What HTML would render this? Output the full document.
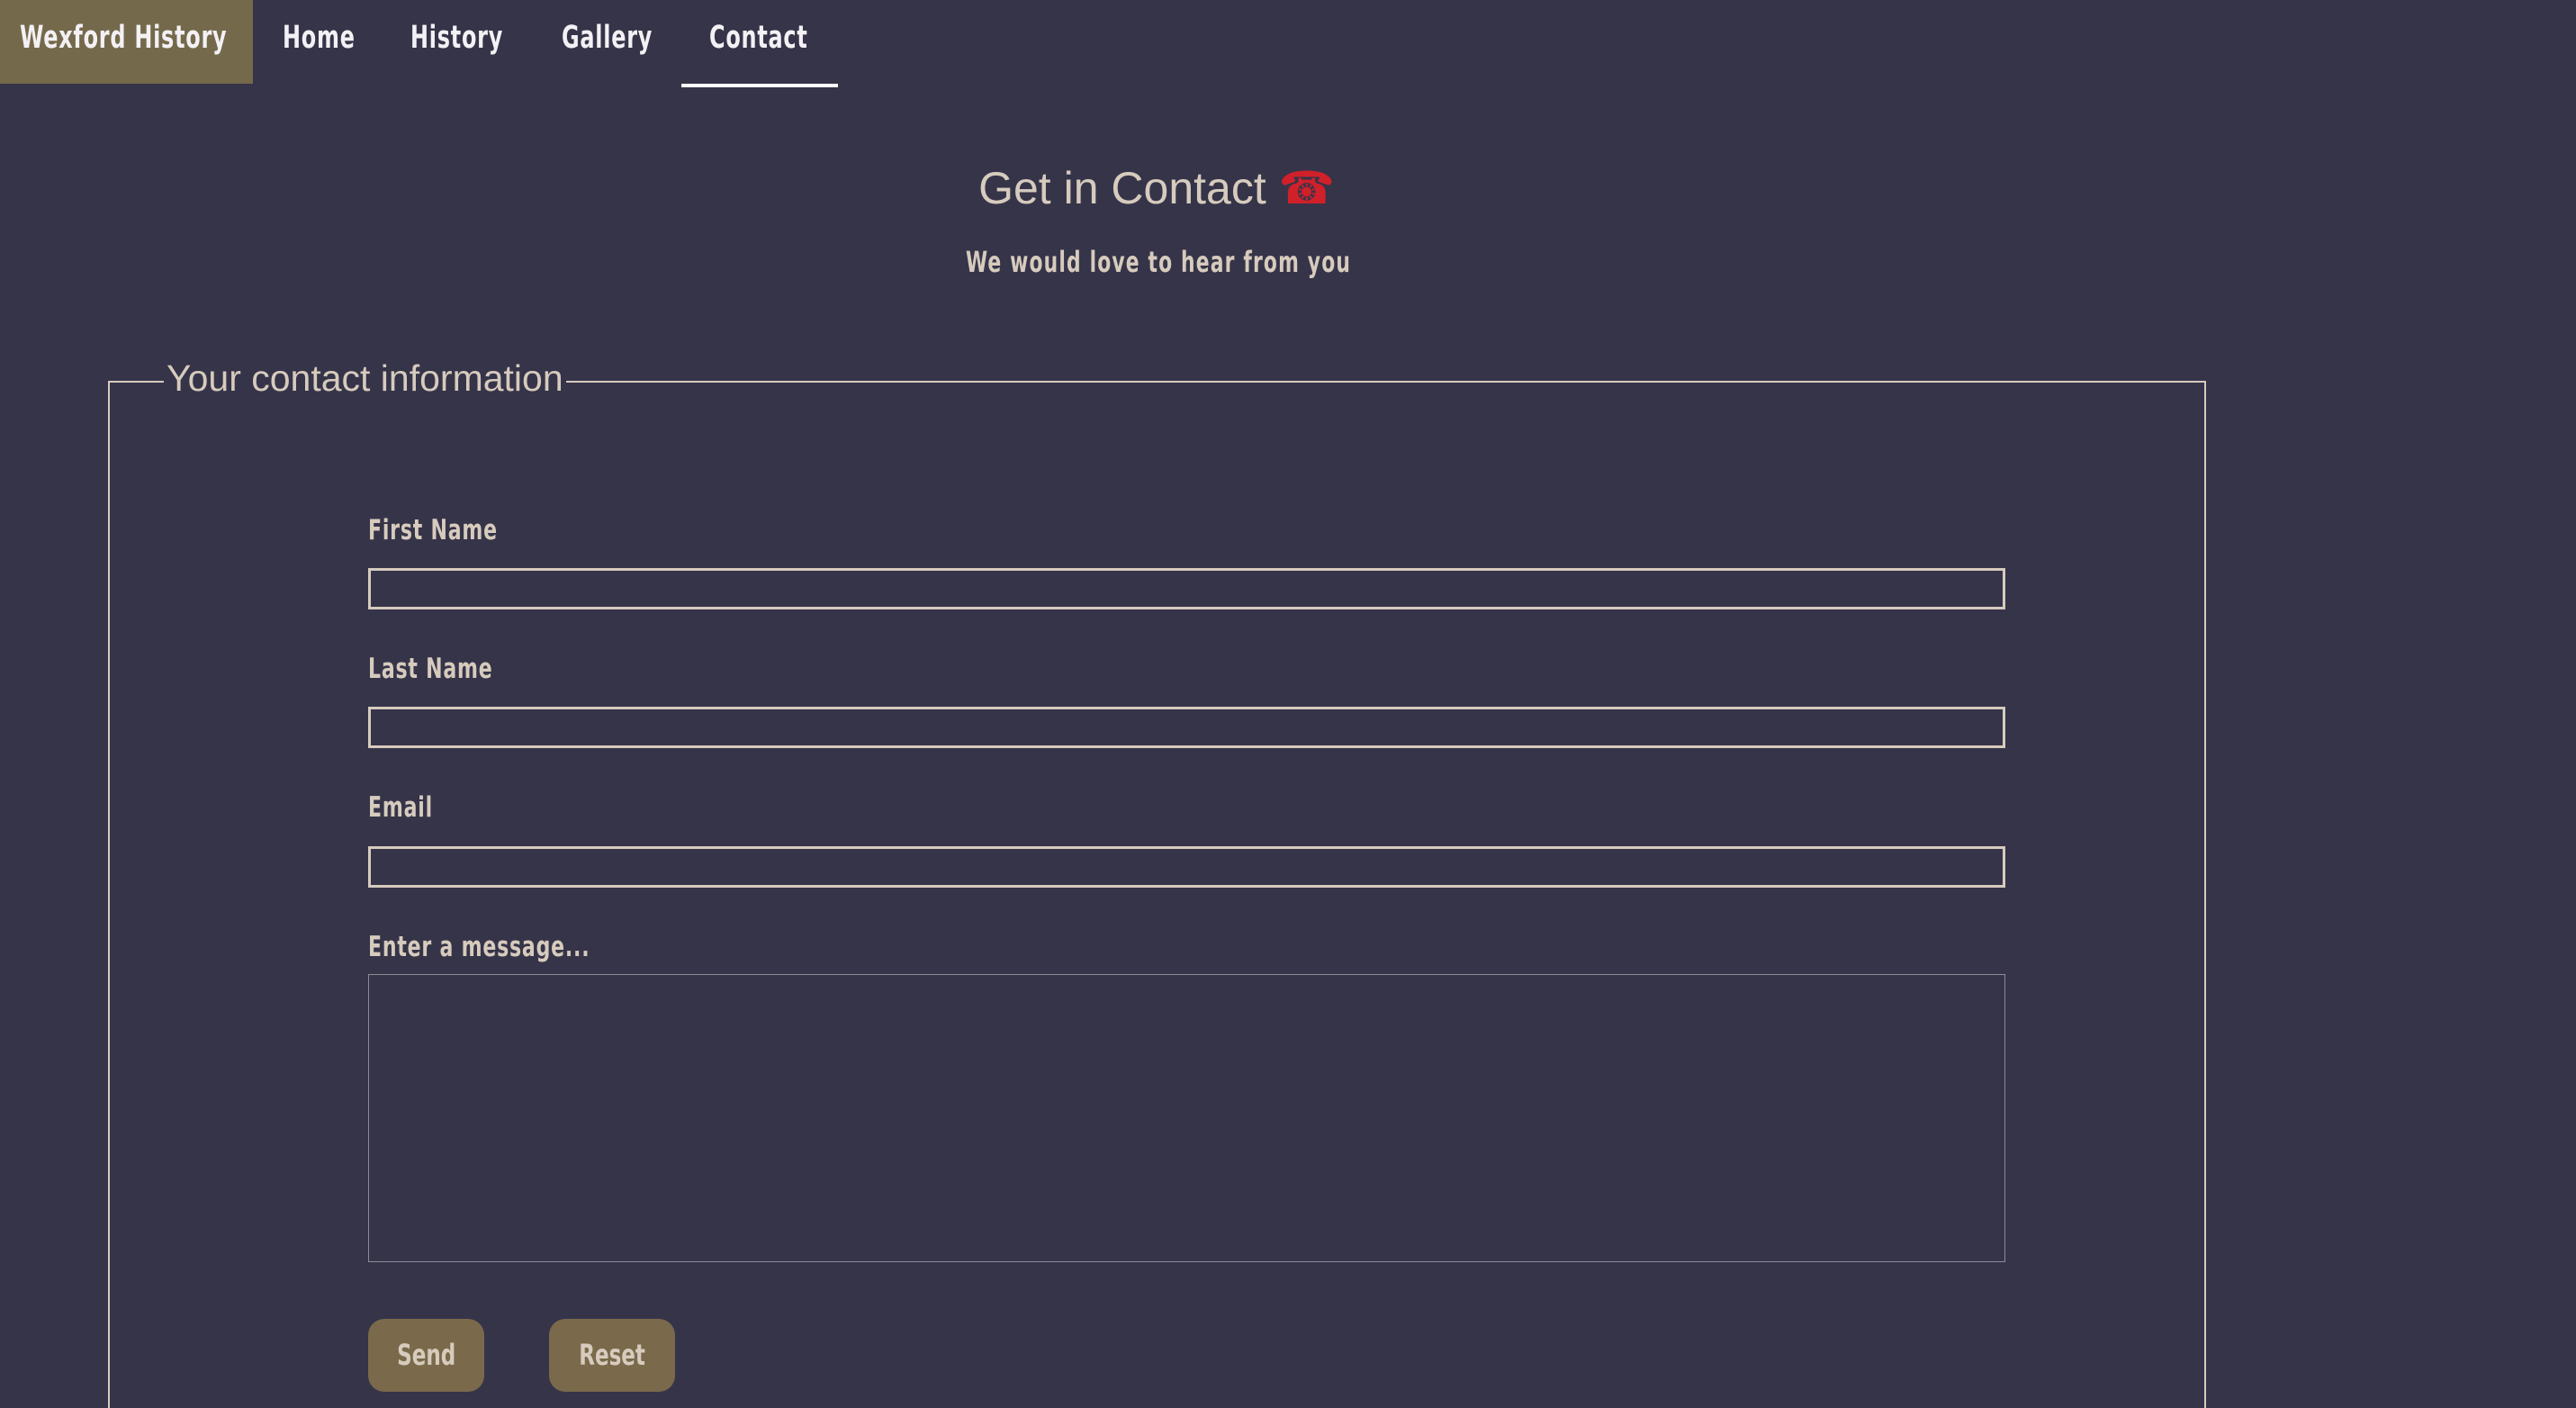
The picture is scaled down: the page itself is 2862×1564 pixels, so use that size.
<!DOCTYPE html>
<html style="overflow:hidden;width:2862px;height:1564px"><head><meta charset="utf-8"><style>
*{margin:0;padding:0;box-sizing:border-box}
body{width:2862px;height:1564px;background:#363449;overflow:hidden;position:relative;font-family:"DejaVu Sans Condensed","Liberation Sans Narrow","Liberation Sans",sans-serif;color:#d6cbbd}
.a{position:absolute;white-space:nowrap}
.brand{left:0;top:0;width:281px;height:93px;background:#75694c}
.nav{font-size:35px;color:#f3f1f4;top:22px;letter-spacing:1px;font-weight:bold}
.nav span{display:inline-block;transform:scaleX(.76);transform-origin:left}
.lbl{font-size:31px;left:409px;letter-spacing:1px;font-weight:bold}
.lbl span,.sub span{display:inline-block;transform:scaleX(.79);transform-origin:left}
.sub span{transform:scaleX(.76)}
.inp{left:409px;width:1819px;height:46px;border:3px solid #d6cbbd}
.btn{background:#7a6a4b;border-radius:18px;height:81px;top:1465px;font-size:32px;text-align:center;line-height:81px;font-weight:bold}
.btn span{display:inline-block;transform:scaleX(.8)}
</style></head><body>
<div class="a brand"></div>
<div class="a nav" style="left:22px"><span>Wexford History</span></div>
<div class="a nav" style="left:314px"><span>Home</span></div>
<div class="a nav" style="left:456px"><span>History</span></div>
<div class="a nav" style="left:624px"><span>Gallery</span></div>
<div class="a nav" style="left:788px"><span>Contact</span></div>
<div class="a" style="left:757px;top:93px;width:174px;height:4px;background:#fff"></div>
<div class="a" style="left:0;width:2570px;top:180px;text-align:center;font-family:'Liberation Sans',sans-serif;font-size:50px">Get in Contact <span style="color:#d0202a">☎</span></div>
<div class="a sub" style="left:1073px;top:272px;font-size:32px;letter-spacing:1.5px;font-weight:bold"><span>We would love to hear from you</span></div>
<div class="a" style="left:120px;top:423px;width:2331px;height:1141px;border:2px solid #d6cbbd;border-bottom:none"></div>
<div class="a" style="left:182px;top:397px;font-size:41px;font-family:'Liberation Sans',sans-serif;background:#363449;padding:0 3px">Your contact information</div>
<div class="a lbl" style="top:571px"><span>First Name</span></div>
<div class="a inp" style="top:631px"></div>
<div class="a lbl" style="top:725px"><span>Last Name</span></div>
<div class="a inp" style="top:785px"></div>
<div class="a lbl" style="top:879px"><span>Email</span></div>
<div class="a inp" style="top:940px"></div>
<div class="a lbl" style="top:1034px"><span>Enter a message...</span></div>
<div class="a" style="left:409px;top:1082px;width:1819px;height:320px;border:1px solid #8e8a98"></div>
<div class="a btn" style="left:409px;width:129px"><span>Send</span></div>
<div class="a btn" style="left:610px;width:140px"><span>Reset</span></div>
</body></html>
